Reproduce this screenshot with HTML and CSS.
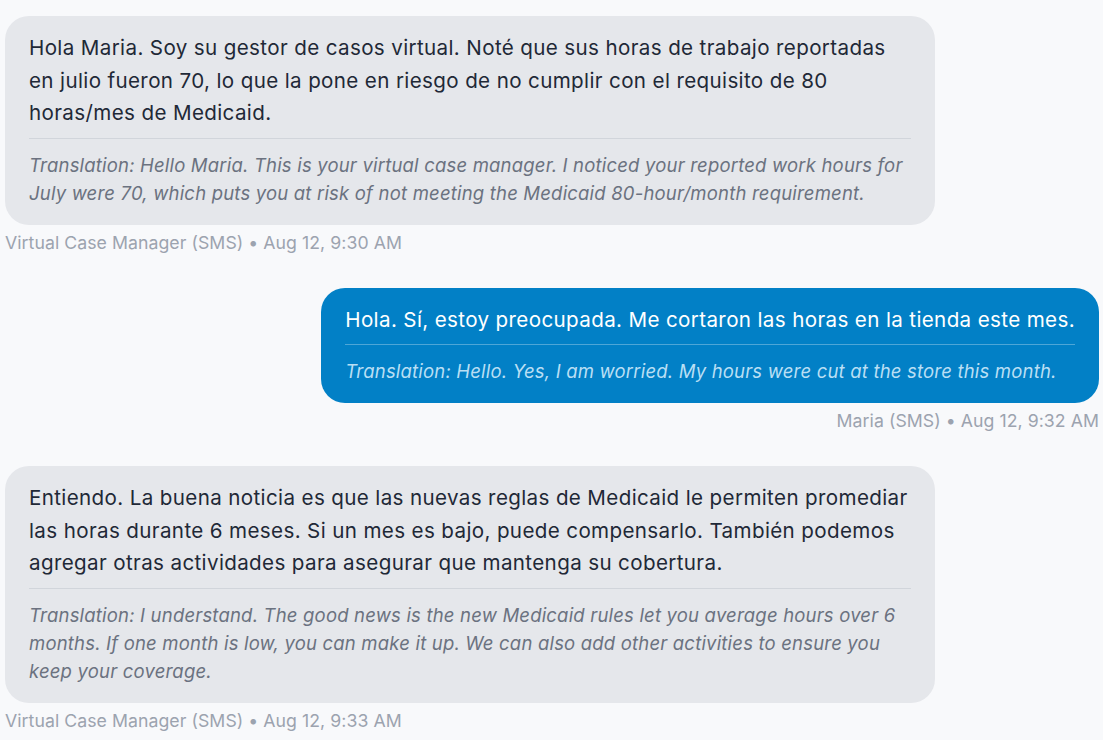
FILE: index.html
```html
<!DOCTYPE html>
<html lang="es">
<head>
<meta charset="utf-8">
<title>SMS conversation</title>
<link rel="stylesheet" href="styles.css">
</head>
<body>
<div class="thread">
  <div class="msg msg-in">
    <div class="bubble">
      <p class="text">Hola Maria. Soy su gestor de casos virtual. Noté que sus horas de trabajo reportadas en julio fueron 70, lo que la pone en riesgo de no cumplir con el requisito de 80 horas/mes de Medicaid.</p>
      <p class="translation">Translation: Hello Maria. This is your virtual case manager. I noticed your reported work hours for July were 70, which puts you at risk of not meeting the Medicaid 80-hour/month requirement.</p>
    </div>
    <div class="meta">Virtual Case Manager (SMS) • Aug 12, 9:30 AM</div>
  </div>

  <div class="msg msg-out">
    <div class="bubble">
      <p class="text">Hola. Sí, estoy preocupada. Me cortaron las horas en la tienda este mes.</p>
      <p class="translation">Translation: Hello. Yes, I am worried. My hours were cut at the store this month.</p>
    </div>
    <div class="meta">Maria (SMS) • Aug 12, 9:32 AM</div>
  </div>

  <div class="msg msg-in">
    <div class="bubble">
      <p class="text">Entiendo. La buena noticia es que las nuevas reglas de Medicaid le permiten promediar las horas durante 6 meses. Si un mes es bajo, puede compensarlo. También podemos agregar otras actividades para asegurar que mantenga su cobertura.</p>
      <p class="translation">Translation: I understand. The good news is the new Medicaid rules let you average hours over 6 months. If one month is low, you can make it up. We can also add other activities to ensure you keep your coverage.</p>
    </div>
    <div class="meta">Virtual Case Manager (SMS) • Aug 12, 9:33 AM</div>
  </div>
</div>
</body>
</html>
```

FILE: styles.css
```css
* { box-sizing: border-box; }
html, body {
  margin: 0;
  padding: 0;
  background: #f8f9fb;
}
body {
  font-family: Inter, "Noto Sans", "Liberation Sans", sans-serif;
  color: #1f2937;
}
.thread {
  display: flex;
  flex-direction: column;
  gap: 33px;
  padding: 16px 4px 0 5px;
}
.msg {
  display: flex;
  flex-direction: column;
}
.msg-in { align-items: flex-start; }
.msg-out { align-items: flex-end; }
.bubble {
  max-width: 85%;
  border-radius: 24px;
  padding: 16px 24px 18px;
}
.msg-in .bubble {
  background: #e5e7eb;
}
.msg-out .bubble {
  background: #0280c6;
  color: #ffffff;
}
.text {
  margin: 0;
  font-size: 20.6px;
  letter-spacing: 0.36px;
  line-height: 32.5px;
}
.translation {
  margin: 8px 0 0;
  padding-top: 12px;
  border-top: 1px solid #d1d5db;
  font-size: 18.5px;
  letter-spacing: 0.19px;
  line-height: 28px;
  font-style: italic;
  color: #6b7280;
}
.msg-out .translation {
  border-top-color: rgba(255, 255, 255, 0.3);
  color: #b9dff4;
}
.meta {
  margin-top: 6px;
  font-size: 17.7px;
  letter-spacing: 0.05px;
  line-height: 24px;
  color: #9ca3af;
}
```
